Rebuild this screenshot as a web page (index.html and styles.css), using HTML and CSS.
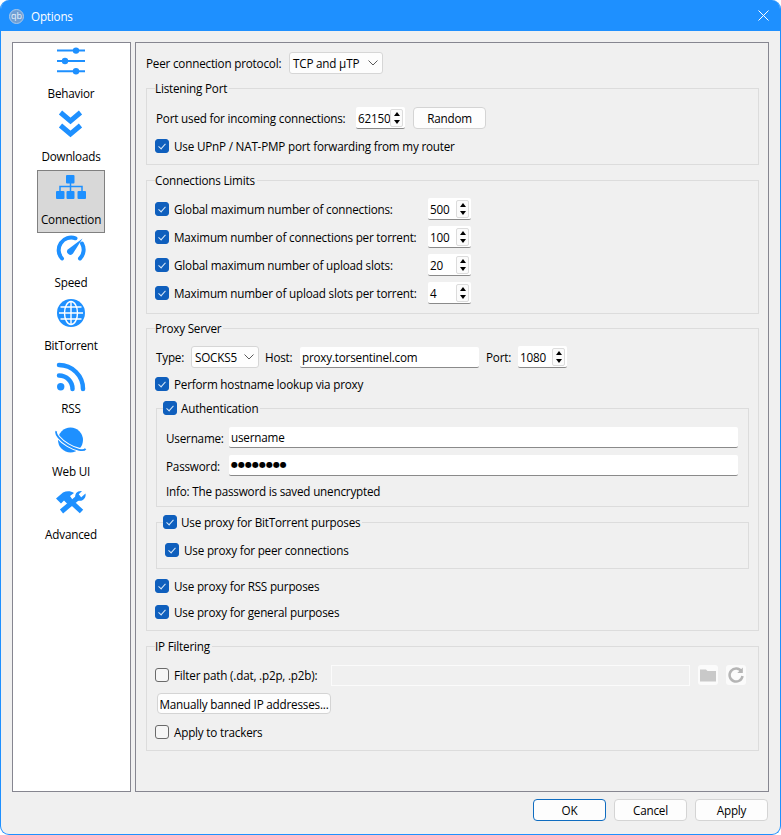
FILE: index.html
```html
<!DOCTYPE html>
<html lang="en">
<head>
<meta charset="utf-8">
<title>Options</title>
<link rel="stylesheet" href="styles.css">
</head>
<body>
<div class="window">
  <header class="titlebar">
    <span class="logo">qb</span>
    <span class="title">Options</span>
    <svg class="close" viewBox="0 0 11 11"><path d="M.5.5l10 10M10.500.5l-10 10"/></svg>
  </header>
  <div class="main">
    <nav class="sidebar">
      <div class="item">
        <svg class="icon" viewBox="0 0 32 32"><path class="ln2" d="M2 5.600H30M2 16H30M2 26.200H30"/><circle class="fill" cx="21" cy="5.600" r="3.200"/><circle class="fill" cx="10" cy="16" r="3.200"/><circle class="fill" cx="21" cy="26.200" r="3.200"/></svg>
        <span>Behavior</span>
      </div>
      <div class="item">
        <svg class="icon" viewBox="0 0 32 32"><path class="ln5" d="M5.500 4.500L15.500 13L25.500 4.500M5.500 17.500L15.500 26L25.500 17.500"/></svg>
        <span>Downloads</span>
      </div>
      <div class="item selected">
        <svg class="icon" viewBox="0 0 32 32"><rect class="fill" x="11" y="4" width="8.500" height="8.500" rx="1"/><rect class="fill" x="1" y="20" width="8.500" height="8" rx="1"/><rect class="fill" x="11.500" y="20" width="8" height="8" rx="1"/><rect class="fill" x="22.500" y="20" width="8.500" height="8" rx="1"/><path class="ln15" d="M15.500 12V20M5 20V15.500H27V20"/></svg>
        <span>Connection</span>
      </div>
      <div class="item">
        <svg class="icon" viewBox="0 0 32 32"><path class="ln4" d="M7 24.500A12.500 12.500 0 0 1 20.500 4.300M27 9.500A12.500 12.500 0 0 1 25 24.500"/><path class="fill" d="M27.500 4.500L18 19.500A3 3 0 0 1 12.800 15.500Z"/></svg>
        <span>Speed</span>
      </div>
      <div class="item">
        <svg class="icon" viewBox="0 0 32 32"><circle class="fill" cx="16" cy="16" r="14"/><g class="grid"><ellipse cx="16" cy="16" rx="6.500" ry="11.500"/><path d="M16 4V28M4 16H28M5.500 10H26.500M5.500 22H26.500"/></g></svg>
        <span>BitTorrent</span>
      </div>
      <div class="item">
        <svg class="icon" viewBox="0 0 32 32"><circle class="fill" cx="5.700" cy="26.700" r="3.700"/><path class="rss" d="M4 15.500A13.500 13.500 0 0 1 17.500 29M4 5A24 24 0 0 1 28 29"/></svg>
        <span>RSS</span>
      </div>
      <div class="item">
        <svg class="icon" viewBox="0 0 32 32"><circle class="fill" cx="15.500" cy="17" r="12.500"/><g transform="translate(16 17) rotate(31)"><path class="ring-gap" d="M-17 0A17 6 0 0 0 17 0"/><path class="ring" d="M-17 0A17 6 0 0 0 17 0"/></g></svg>
        <span>Web UI</span>
      </div>
      <div class="item">
        <svg class="icon" viewBox="0 0 32 32"><path class="ln5b" d="M12 12L26.500 25.500M25 10L6.500 25.500"/><path class="fill" d="M1 12.500L8 6.500C12 4.500 16 5 19 7L15 10L17 13L12.500 18L9 14.500L6 17.500Z"/><path class="fill" d="M20.500 12C19.500 8 22 4.500 27 5L23.500 8.500L26 11.500L30.500 7.500C31.500 12 27.500 16 23 14.500Z"/></svg>
        <span>Advanced</span>
      </div>
    </nav>
    <section class="pane">
      <div class="row r-peer">
        <span class="lbl w-peer">Peer connection protocol:</span>
        <div class="combo w-proto">TCP and µTP<svg class="chev" viewBox="0 0 10 6"><path d="M.5.500L5 5L9.500.5"/></svg></div>
      </div>

      <div class="group g-listen">
        <div class="legend">Listening Port</div>
        <div class="row r-port">
          <span class="lbl w-port">Port used for incoming connections:</span>
          <div class="spin w-5d"><span class="val">62150</span><span class="arrows"><i class="up"></i><i class="down"></i></span></div>
          <button class="btn w-btn">Random</button>
        </div>
        <label class="check-row r-after"><span class="chk on"></span>Use UPnP / NAT-PMP port forwarding from my router</label>
      </div>

      <div class="group g-limits">
        <div class="legend">Connections Limits</div>
        <div class="limit"><label class="check-row"><span class="chk on"></span>Global maximum number of connections:</label><div class="spin w-num"><span class="val">500</span><span class="arrows"><i class="up"></i><i class="down"></i></span></div></div>
        <div class="limit"><label class="check-row"><span class="chk on"></span>Maximum number of connections per torrent:</label><div class="spin w-num"><span class="val">100</span><span class="arrows"><i class="up"></i><i class="down"></i></span></div></div>
        <div class="limit"><label class="check-row"><span class="chk on"></span>Global maximum number of upload slots:</label><div class="spin w-num"><span class="val">20</span><span class="arrows"><i class="up"></i><i class="down"></i></span></div></div>
        <div class="limit"><label class="check-row"><span class="chk on"></span>Maximum number of upload slots per torrent:</label><div class="spin w-num"><span class="val">4</span><span class="arrows"><i class="up"></i><i class="down"></i></span></div></div>
      </div>

      <div class="group g-proxy">
        <div class="legend">Proxy Server</div>
        <div class="row r-type">
          <span class="lbl w-type">Type:</span>
          <div class="combo w-socks">SOCKS5<svg class="chev" viewBox="0 0 10 6"><path d="M.5.500L5 5L9.500.5"/></svg></div>
          <span class="lbl w-host">Host:</span>
          <div class="field w-hostf">proxy.torsentinel.com</div>
          <span class="lbl w-plabel">Port:</span>
          <div class="spin w-pnum"><span class="val">1080</span><span class="arrows"><i class="up"></i><i class="down"></i></span></div>
        </div>
        <label class="check-row r-lookup"><span class="chk on"></span>Perform hostname lookup via proxy</label>

        <div class="group g-auth">
          <label class="legend check-row"><span class="chk on"></span>Authentication</label>
          <div class="row cred"><span class="lbl w-cred">Username:</span><div class="field w-credf">username</div></div>
          <div class="row cred r-pass"><span class="lbl w-cred">Password:</span><div class="field w-credf dots">●●●●●●●●</div></div>
          <div class="info">Info: The password is saved unencrypted</div>
        </div>

        <div class="group g-bt">
          <label class="legend check-row"><span class="chk on"></span>Use proxy for BitTorrent purposes</label>
          <label class="check-row"><span class="chk on"></span>Use proxy for peer connections</label>
        </div>

        <label class="check-row r-rss"><span class="chk on"></span>Use proxy for RSS purposes</label>
        <label class="check-row r-general"><span class="chk on"></span>Use proxy for general purposes</label>
      </div>

      <div class="group g-ip">
        <div class="legend">IP Filtering</div>
        <div class="row r-filter">
          <label class="check-row w-filter"><span class="chk"></span>Filter path (.dat, .p2p, .p2b):</label>
          <div class="field disabled"></div>
          <span class="tool">
            <svg viewBox="0 0 20 20"><path class="folder" d="M2 4.500H8L9.500 6H18V16.500H2Z"/></svg>
          </span>
          <span class="tool">
            <svg viewBox="0 0 20 20"><path class="reload" d="M15.500 6.500A6.500 6.500 0 1 0 16.500 11"/><path class="reload-tip" d="M16.800 2.500V8H11.300Z"/></svg>
          </span>
        </div>
        <button class="btn w-banned">Manually banned IP addresses...</button>
        <label class="check-row r-trackers"><span class="chk"></span>Apply to trackers</label>
      </div>
    </section>
  </div>
  <footer class="footer">
    <button class="btn w-foot default">OK</button>
    <button class="btn w-foot">Cancel</button>
    <button class="btn w-foot">Apply</button>
  </footer>
</div>
</body>
</html>
```
FILE: styles.css
```css
* { box-sizing: border-box; }
html, body { margin: 0; height: 100%; background: #ffffff; }
body { font: 11.700px/16px "Open Sans", "Noto Sans", sans-serif; color: #000; letter-spacing: -0.2px; }

.window { width: 781px; height: 835px; display: flex; flex-direction: column; background: #f0f0f0; border: 1px solid #1e90ff; border-top: 0; border-radius: 9px; overflow: hidden; }

.titlebar { height: 31px; flex: none; background: #1e90ff; color: #fff; display: flex; align-items: center; padding: 0 11px 0 8px; }
.logo { width: 15px; height: 15px; margin-top: 1px; border-radius: 50%; background: #6f9fd4; border: 1px solid #a9c8ea; color: #e8f1fb; font-size: 9px; line-height: 12px; text-align: center; letter-spacing: 0; }
.title { margin-left: 7px; }
.close { width: 11px; height: 11px; margin-left: auto; fill: none; stroke: #fff; stroke-width: 1; }

.main { flex: 1; display: flex; gap: 4px; padding: 11px 11px 0 11px; min-height: 0; }
.sidebar { width: 119px; flex: none; background: #fff; border: 1px solid #868690; display: flex; flex-direction: column; align-items: center; padding: 1px 1px 0 0; }
.item { width: 68px; height: 63px; flex: none; display: flex; flex-direction: column; align-items: center; padding-top: 1px; border: 1px solid transparent; white-space: nowrap; }
.item span { margin-top: 8px; }
.item.selected { background: #d8d8d8; border-color: #808080; }
.icon { width: 32px; height: 32px; flex: none; margin-top: -1px; }
.fill { fill: #1e90ff; }
.ln2, .ln5, .ln15, .ln4, .rss, .ln5b { fill: none; stroke: #1e90ff; }
.ln2 { stroke-width: 2; }
.ln5 { stroke-width: 5; }
.ln5b { stroke-width: 5; }
.ln15 { stroke-width: 1.500; }
.ln4 { stroke-width: 4; stroke-linecap: round; }
.rss { stroke-width: 4.500; stroke-linecap: round; }
.grid { fill: none; stroke: #fff; stroke-width: 1.400; }
.ring { fill: none; stroke: #1e90ff; stroke-width: 1.800; }
.ring-gap { fill: none; stroke: #fff; stroke-width: 4; }

.pane { flex: 1; min-width: 0; border: 1px solid #868690; padding: 9px 9px 0 10px; }

.row { display: flex; align-items: center; }
.lbl { flex: none; white-space: nowrap; }
.r-peer { height: 22px; }
.w-peer { width: 143px; }
.w-proto { width: 94px; }

.group { position: relative; border: 1px solid #dcdcdc; }
.legend { position: absolute; top: -9px; left: 8px; background: #f0f0f0; padding-right: 2px; height: 16px; line-height: 16px; white-space: nowrap; }
.group > .legend.check-row { height: 18px; top: -10px; left: 7px; gap: 4px; }

.g-listen { margin-top: 14px; padding: 18px 9px 8px; height: 77px; }
.w-port { width: 200px; }
.r-port { height: 22px; }
.r-after { margin-top: 7px; }
.w-5d { width: 49px; }
.w-btn { width: 73px; margin-left: 8px; height: 22px; }

.g-limits { margin-top: 15px; padding: 17px 9px 9px; display: flex; flex-direction: column; gap: 6px; }
.limit { display: grid; grid-template-columns: 272px auto; justify-content: start; height: 22px; align-items: center; }
.w-num { width: 43px; }

.g-proxy { margin-top: 14px; padding: 17px 9px 8px; }
.r-type { height: 22px; }
.w-type { width: 35px; }
.w-socks { width: 68px; height: 21px; }
.w-host { width: 35px; margin-left: 6px; }
.w-hostf { width: 179px; }
.w-plabel { width: 32px; margin-left: 7px; }
.w-pnum { width: 49px; height: 21px; }
.r-lookup { margin-top: 6px; }

.g-auth { margin-top: 14px; padding: 18px 10px 7px 9px; }
.cred { height: 21px; }
.r-pass { margin-top: 7px; }
.w-cred { width: 63px; }
.w-credf { width: 509px; }
.dots { font-size: 8px; letter-spacing: 0; font-family: "DejaVu Sans", sans-serif; }
.info { margin-top: 7px; height: 16px; }

.g-bt { margin-top: 15px; padding: 17px 9px 8px 9px; }
.r-rss { margin-top: 7px; }
.r-general { margin-top: 6px; }

.g-ip { margin-top: 15px; padding: 18px 9px 8px; }
.r-filter { height: 20px; }
.w-filter { width: 175px; flex: none; }
.disabled { width: 359px; height: 19px; background: #f0f0f0; border: 1px solid #fbfbfb; }
.tool { width: 20px; height: 20px; flex: none; margin-left: 8px; background: #fbfbfb; border-radius: 3px; display: block; }
.tool svg { display: block; width: 20px; height: 20px; }
.folder { fill: #c9c9c9; }
.reload { fill: none; stroke: #b5b5b5; stroke-width: 2.500; }
.reload-tip { fill: #b5b5b5; }
.w-banned { width: 174px; height: 21px; margin: 8px 0 0 1px; display: block; white-space: nowrap; }
.r-trackers { margin-top: 8px; }

.check-row { display: flex; align-items: center; gap: 5px; height: 20px; white-space: nowrap; }
.chk { width: 14px; height: 14px; margin-left: -1px; flex: none; border: 1px solid #6a6a6a; border-radius: 3px; background: #f6f6f6; position: relative; }
.chk.on { background: #0f5fbd; border-color: #0f5fbd; }
.chk.on::after { content: ""; position: absolute; left: 4px; top: 1.500px; width: 3px; height: 6px; border: solid #d8e8f8; border-width: 0 1px 1px 0; transform: rotate(42deg); }

.combo { flex: none; height: 22px; background: #fdfdfd; border: 1px solid #d6d6d6; border-radius: 3px; display: flex; align-items: center; justify-content: space-between; padding: 0 4px 0 3px; }
.chev { width: 10px; height: 6px; fill: none; stroke: #5a5a5a; stroke-width: 1; }

.field { flex: none; height: 21px; background: #fff; border-bottom: 1px solid #8a8a8a; border-radius: 2px; padding: 0 2px; display: flex; align-items: center; }
.field.disabled { border: 1px solid #fbfbfb; background: #f0f0f0; border-radius: 0; padding: 0; }

.spin { flex: none; height: 22px; background: #fff; border-bottom: 1px solid #8a8a8a; border-radius: 2px; display: flex; align-items: center; justify-content: space-between; padding-left: 2px; }
.arrows { width: 13px; height: 18px; margin-right: 2px; display: flex; flex-direction: column; background: #fbfbfb; border: 1px solid #dcdcdc; border-radius: 2px; }
.arrows i { flex: 1; display: flex; align-items: center; justify-content: center; }
.arrows i::after { content: ""; width: 0; height: 0; border-left: 3.500px solid transparent; border-right: 3.500px solid transparent; }
.up::after { border-bottom: 4px solid #000; }
.down::after { border-top: 4px solid #000; }

.btn { font: inherit; letter-spacing: inherit; color: #000; background: #fdfdfd; border: 1px solid #d4d4d4; border-radius: 4px; flex: none; padding: 0; }
.footer { height: 42px; flex: none; display: flex; justify-content: flex-end; gap: 8px; padding: 7px 12px 0 0; }
.w-foot { width: 73px; height: 22px; }
.default { border-color: #0f6cc0; }
```
